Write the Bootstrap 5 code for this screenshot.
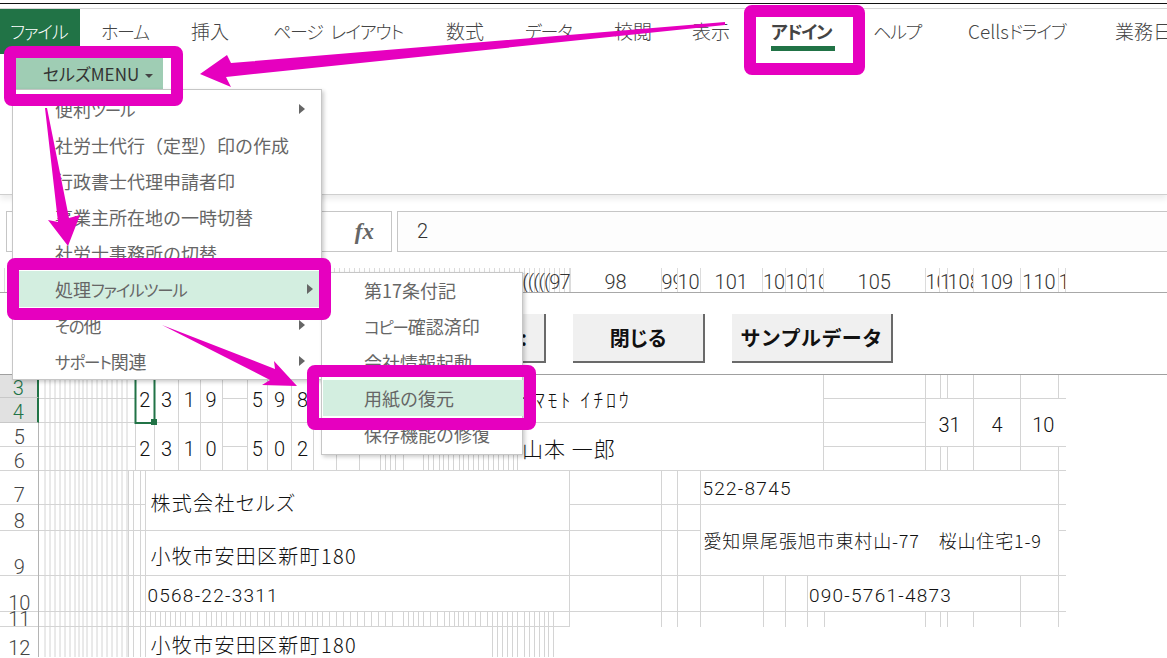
<!DOCTYPE html>
<html lang="ja">
<head>
<meta charset="utf-8">
<title>セルズMENU</title>
<link rel="stylesheet" href="https://cdn.jsdelivr.net/npm/bootstrap@5.3.0/dist/css/bootstrap.min.css">
<style>
:root{--mag:#e600bf;--xl:#217346;--cell:#d4d4d4}
html,body{margin:0;background:#fff}
body{width:1167px;height:658px;overflow:hidden;position:relative;font-family:"Noto Sans CJK JP","Liberation Sans",sans-serif;color:#444}
.rule-a{height:4px;border-bottom:1px solid #111}
.rule-b{height:5px;border-bottom:1px solid #d8d8d8}
.ribbon{height:186px;border-bottom:1px solid #cfcfcf;box-shadow:0 4px 6px rgba(0,0,0,.08);background:#fff}
.tabs{height:45px;font-size:19px;font-weight:300;color:#444}
.tab-item{line-height:44px;white-space:nowrap;flex:none}
.tk{font-size:18px;letter-spacing:-1.2px;word-spacing:5px;font-feature-settings:"palt"}
.tab-file{width:80px;padding-left:10px;background:var(--xl);color:#fff;margin-right:21px}
.t1{width:90px}.t2{width:82px}.t3{width:173px}.t4{width:79px}.t5{width:89px}.t6{width:78px}.t7{width:79px}.t9{width:95px}.t10{width:147px}
.tab-on{font-weight:700;position:relative;width:64px;margin-right:38px;color:#444}
.tab-on::after{content:"";position:absolute;left:0;right:0;top:37px;height:5px;background:var(--xl)}
.cells-btn-wrap{margin:4px 0 0 16px;width:155px;height:36px}
.cells-btn{width:147px;height:31px;background:#9fcdb4;border:0;border-radius:0;font-size:17px;line-height:31px;padding:0 0 0 27px;color:#333;text-align:left;font-weight:400;font-feature-settings:"palt"}
.caret-mini{display:inline-block;border:4px solid transparent;border-top-color:#444;border-bottom:0;margin:0 0 3px 6px}
.fbar{margin-top:16px;height:41px;padding-left:6px;gap:5px}
.fbox{width:386px;border:1px solid #c6c6c6;background:#fff;position:relative}
.fxmark{font-family:"Liberation Serif",serif;font-style:italic;font-weight:700;font-size:23px;color:#666;padding-right:17px;line-height:39px}
.finput{flex:1;border:1px solid #c6c6c6;border-right:0;background:#fdfdfd;padding-left:19px;font-size:20px;line-height:39px;font-weight:300;font-family:Roboto,sans-serif;color:#333}
.colhead{margin-top:16px;height:25px;border-bottom:1px solid #a8a8a8;display:grid;grid-template-columns:570.5px 91px 16px 23px 62.5px 22.5px 21.5px 17px 101.5px 14.5px 7.5px 26px 47px 38px 7.5px;font-family:Roboto,sans-serif;font-weight:300;font-size:20px;line-height:29px;color:#333}
.colhead>div{border-right:1px solid #dcdcdc;overflow:hidden;white-space:nowrap;text-align:center}
.colhead .lead-col{text-align:right;padding-right:0;background:repeating-linear-gradient(90deg,transparent 0 4px,#dcdcdc 4px 5px);letter-spacing:-1px}
.btnrow{height:82px;padding-top:21px;padding-left:405px;gap:27px;border-bottom:1px solid #a0a0a0}
.sheet-btn{height:49px;background:#f0f0f0;border:0;border-right:2px solid #6a6a6a;border-bottom:2px solid #6a6a6a;border-radius:0;font-weight:700;font-size:20px;color:#111;padding:0;line-height:46px}
.sheet-btn:hover{background:#f0f0f0;color:#111}
.b1{width:141px;text-align:right;padding-right:17px;font-feature-settings:"palt"}.b2{width:132px;font-feature-settings:"palt"}.b3{width:161px;letter-spacing:.4px}
.sheet{position:relative;height:282px;display:grid;grid-template-columns:38.5px 96.5px 10.5px 9px 24px 21.5px 22px 25px 20.5px 24px 22.2px 205.3px 50.5px 131px 106.5px 118.5px 48px 47px 45.5px 101px;grid-template-rows:23px 25px 23px 24px 34px 26px 46px 36px 15px 30px;font-family:Roboto,sans-serif;font-weight:300;font-size:20px;color:#111;line-height:1}
.sheet-lines{position:absolute;left:0;top:0}
.sheet>span,.sheet>div{position:relative;white-space:nowrap;align-self:center}
.rn{grid-column:1;text-align:center;color:#444;align-self:end!important;margin-bottom:-1px}
.rn.r11a{margin-bottom:-2px}
.rn-on{background:#e1e1e1;color:var(--xl);border-right:2px solid var(--xl);align-self:stretch!important;display:flex;align-items:center;justify-content:center;padding-top:3px;margin-bottom:0;border-bottom:1px solid #c8c8c8}
.num{text-align:center}
.jp{font-family:"Noto Sans CJK JP",sans-serif;font-weight:300;color:#111}
.jp-a{font-size:20px;letter-spacing:1.3px;padding-left:5px;font-feature-settings:"palt";margin-top:5px}
.r3a{grid-row:1}.r4a{grid-row:2}.r5a{grid-row:3}.r6a{grid-row:4}.r7a{grid-row:5}.r8a{grid-row:6}.r9a{grid-row:7}.r10a{grid-row:8}.r11a{grid-row:9}.r12a{grid-row:10}
.top-d{grid-row:1/3;margin-top:2px}.low-d{grid-row:3/5;margin-top:4px}.mid{grid-row:2/4;margin-top:5px}.co{grid-row:5/7}.zip-r{grid-row:5;margin-top:5px}.addr{grid-row:6/8;font-size:18px;padding-left:3px;letter-spacing:.85px;font-feature-settings:"palt"}
.c1{grid-column:3/5}.c2{grid-column:5}.c3{grid-column:6}.c4{grid-column:7}.c5{grid-column:9}.c6{grid-column:10}.c7{grid-column:11}
.c-name{grid-column:13/17}.c-co{grid-column:4/14}.c-r{grid-column:15/20}.c-m{grid-column:16/19}.c31{grid-column:17}.c4d{grid-column:18}.c10{grid-column:19}
.kana{font-size:20px;letter-spacing:2.8px;padding-left:3px;font-weight:300}
.yamamoto{font-size:21px;padding-left:3px;letter-spacing:1px;font-feature-settings:"palt"}
.tel{padding-left:2px;letter-spacing:1.25px;font-size:19px;margin-top:3px}
.xl-menu.dropdown-menu{position:absolute;display:block;margin:0;padding:1px 0 0;border:1px solid #c6c6c6;border-radius:0;box-shadow:2px 2px 4px rgba(0,0,0,.2);z-index:5;min-width:0}
.m1{left:12px;top:89px;width:310px;height:291px}
.m2{left:321px;top:272px;width:202px;height:183px;z-index:6!important;padding-top:0!important}
.xl-menu .dropdown-item{height:36px;line-height:36px;padding:0 16px 0 42px;font-size:18px;color:#666;background:transparent;display:flex;justify-content:space-between;align-items:center;white-space:nowrap}
.m2 .dropdown-item:first-child{margin-top:-1px}
.xl-menu .dropdown-item.hl{background:#d3eee0;color:#666}
.m1 .hl-1{margin:0 2px 0 6px;padding-left:36px;padding-right:14px}
.m2 .hl-2{margin:0 1px;padding-left:41px}
.kn{font-size:16.5px;letter-spacing:-1.2px;font-feature-settings:"palt"}
.tri{display:inline-block;border:5px solid transparent;border-left:6px solid #666;border-right:0}
.frame-box{position:absolute;border:12px solid var(--mag);border-radius:8px;z-index:8;pointer-events:none}
.f1{left:4px;top:46px;width:179px;height:60px}
.f2{left:744px;top:5px;width:121px;height:70px}
.f3{left:7px;top:258px;width:324px;height:62px}
.f4{left:307px;top:365px;width:229px;height:65px}
.arrows{position:absolute;left:0;top:0;z-index:9;pointer-events:none}
</style>
</head>
<body>
<div class="rule-a"></div>
<div class="rule-b"></div>
<div class="ribbon">
  <div class="tabs d-flex">
    <div class="tab-item tab-file"><span class="tk">ファイル</span></div>
    <div class="tab-item t1"><span class="tk">ホーム</span></div>
    <div class="tab-item t2">挿入</div>
    <div class="tab-item t3"><span class="tk">ページ レイアウト</span></div>
    <div class="tab-item t4">数式</div>
    <div class="tab-item t5"><span class="tk">データ</span></div>
    <div class="tab-item t6">校閲</div>
    <div class="tab-item t7">表示</div>
    <div class="tab-item tab-on"><span class="tk">アドイン</span></div>
    <div class="tab-item t9"><span class="tk">ヘルプ</span></div>
    <div class="tab-item t10">Cells<span class="tk">ドライブ</span></div>
    <div class="tab-item">業務日</div>
  </div>
  <div class="cells-btn-wrap"><button class="btn cells-btn" type="button">セルズMENU<span class="caret-mini"></span></button></div>
</div>
<div class="fbar d-flex">
  <div class="fbox d-flex justify-content-end"><span class="fxmark">fx</span></div>
  <div class="finput">2</div>
</div>
<div class="colhead">
  <div class="lead-col">((((((((((97</div><div>98</div><div>99</div><div>100</div><div>101</div><div>102</div><div>103</div><div>104</div><div>105</div><div>106</div><div>107</div><div>108</div><div>109</div><div>110</div><div>111</div>
</div>
<div class="btnrow d-flex">
  <button class="btn sheet-btn b1" type="button">印刷実行:</button>
  <button class="btn sheet-btn b2" type="button">閉じる</button>
  <button class="btn sheet-btn b3" type="button">サンプルデータ</button>
</div>
<div class="sheet">
  <svg class="sheet-lines" width="1167" height="282" viewBox="0 376 1167 282" fill="none">
    <path stroke="#d4d4d4" d="M45 376V658M50 376V658M55 376V658M60 376V658M65 376V658M70 376V658M75 376V658M79 376V658M83 376V658M87 376V658M92 376V658M97 376V658M102 376V658M107 376V658M112 376V658M117 376V658M122 376V658M127 376V658M135.500 376V471M133.500 471V658M128.500 471V658M140.500 471V658M145.500 471V658
    M154.500 376V471M178.500 376V471M200.500 376V471M222.500 376V471M247.500 376V471M267.500 376V471M291.500 376V471M313.500 376V471M336.500 376V471M359.500 376V471M380.500 376V471M385.500 376V471M390.500 376V471M395.500 376V471M403.500 376V471M423.500 376V471M428.500 376V471M433.500 376V471M439.500 376V471M443.500 376V471M448.500 376V471M453.500 376V471M459.500 376V471M463.500 376V471M468.500 376V471M473.500 376V471M478.500 376V471M483.500 376V471M488.500 376V471M493.500 376V471M498.500 376V471M503.500 376V471M508.500 376V471M513.500 376V471M517.500 376V471
    M823.500 376V471M925.500 376V471M940.500 376V399M947.500 376V399M973.500 376V471M1020.500 376V471M1058.500 376V399M940.500 447V471M947.500 447V471M1058.500 447V471
    M569.500 471V628M661.500 471V628M677.500 471V628M700.500 471V628M1058.500 471V628M763.500 577V628M785.500 577V628M807.500 577V628M1020.500 577V628M824.500 613V628M925.500 613V628M940.500 613V628M947.500 613V628M973.500 613V628
    M150.500 613V628M155.500 613V628M160.500 613V628M165.500 613V628M170.500 613V628M175.500 613V628M180.500 613V628M185.500 613V628M192.500 613V628M199.500 613V628M206.500 613V628M211.500 613V628M216.500 613V628M221.500 613V628M226.500 613V628M233.500 613V628M240.500 613V628M245.500 613V628M250.500 613V628M257.500 613V628M264.500 613V628M269.500 613V628M274.500 613V628M281.500 613V628M288.500 613V628M293.500 613V628M298.500 613V628M305.500 613V628M312.500 613V628M317.500 613V628M322.500 613V628M329.500 613V628M336.500 613V628M343.500 613V628M350.500 613V628M357.500 613V628M364.500 613V628M371.500 613V628M378.500 613V628M385.500 613V628M392.500 613V628M403.500 613V628M408.500 613V628M413.500 613V628M418.500 613V628M423.500 613V628M430.500 613V628M437.500 613V628M444.500 613V628M449.500 613V628M454.500 613V628M458.500 613V628M463.500 613V628M468.500 613V628M475.500 613V628M480.500 613V628M487.500 613V628
    M492.500 613V658M497.500 613V658M502.500 613V658M507.500 613V658M512.500 613V658M517.500 613V658M524.500 613V658M529.500 613V658M534.500 613V658M539.500 613V658M544.500 613V658M548.500 613V658M553.500 613V658
    M0 399.500H135M222 399.500H247M824 399.500H1066M0 423.500H925M0 447.500H135M222 447.500H247M824 447.500H1066M0 471.500H1066M0 505.500H145M570 505.500H1066M0 531.500H700M1058 531.500H1066M0 576.500H1066M0 612.500H1066M0 627.500H569"/>
    <path stroke="#b4b4b4" d="M38.500 424V658"/>
    <path stroke="#217346" stroke-width="2" d="M135.500 380V424H154.500V380"/>
    <path fill="#217346" d="M151 420h6v6h-6z"/>
    <path stroke="#111" d="M322 455.500h4M345 455.500h4M366 455.500h4M410 455.500h4"/>
  </svg>
  <div class="rn rn-on r3a">3</div><div class="rn rn-on r4a">4</div>
  <div class="rn r5a">5</div><div class="rn r6a">6</div><div class="rn r7a">7</div><div class="rn r8a">8</div><div class="rn r9a">9</div><div class="rn r10a">10</div><div class="rn r11a">11</div><div class="rn r12a">12</div>

  <span class="num top-d c1">2</span><span class="num top-d c2">3</span><span class="num top-d c3">1</span><span class="num top-d c4">9</span><span class="num top-d c5">5</span><span class="num top-d c6">9</span><span class="num top-d c7">8</span>
  <span class="num low-d c1">2</span><span class="num low-d c2">3</span><span class="num low-d c3">1</span><span class="num low-d c4">0</span><span class="num low-d c5">5</span><span class="num low-d c6">0</span><span class="num low-d c7">2</span>

  <span class="jp kana top-d c-name">ﾔﾏﾓﾄ ｲﾁﾛｳ</span>
  <span class="jp yamamoto low-d c-name">山本 一郎</span>
  <span class="num mid c31">31</span><span class="num mid c4d">4</span><span class="num mid c10">10</span>

  <span class="jp jp-a co c-co">株式会社セルズ</span>
  <span class="jp jp-a r9a c-co">小牧市安田区新町180</span>
  <span class="tel r10a c-co">0568-22-3311</span>
  <span class="jp jp-a r12a c-co">小牧市安田区新町180</span>
  <span class="tel zip-r c-r">522-8745</span>
  <span class="jp addr c-r">愛知県尾張旭市東村山-77　桜山住宅1-9</span>
  <span class="tel r10a c-m">090-5761-4873</span>
</div>

<div class="dropdown-menu xl-menu m1">
  <a class="dropdown-item" href="#"><span>便利<span class="kn">ツール</span></span><span class="tri"></span></a>
  <a class="dropdown-item" href="#">社労士代行（定型）印の作成</a>
  <a class="dropdown-item" href="#">行政書士代理申請者印</a>
  <a class="dropdown-item" href="#">事業主所在地の一時切替</a>
  <a class="dropdown-item" href="#">社労士事務所の切替</a>
  <a class="dropdown-item hl hl-1" href="#"><span>処理<span class="kn">ファイルツール</span></span><span class="tri"></span></a>
  <a class="dropdown-item" href="#"><span><span class="kn">その</span>他</span><span class="tri"></span></a>
  <a class="dropdown-item" href="#"><span><span class="kn">サポート</span>関連</span><span class="tri"></span></a>
</div>
<div class="dropdown-menu xl-menu m2">
  <a class="dropdown-item" href="#">第17条付記</a>
  <a class="dropdown-item" href="#"><span><span class="kn">コピー</span>確認済印</span></a>
  <a class="dropdown-item" href="#">会社情報起動</a>
  <a class="dropdown-item hl hl-2" href="#">用紙の復元</a>
  <a class="dropdown-item" href="#">保存機能の修復</a>
</div>

<div class="frame-box f1"></div>
<div class="frame-box f2"></div>
<div class="frame-box f3"></div>
<div class="frame-box f4"></div>
<svg class="arrows" width="1167" height="658" viewBox="0 0 1167 658">
  <g fill="#e600bf">
    <polygon points="725,22 231,63 227,55 200,74 231,87 226,77 725,25"/>
    <polygon points="45,108 47,108 69,218 80,215 68,246 48,220 58,222"/>
    <polygon points="162,325 275,369 274,361 297,386 262,385 270,380"/>
  </g>
</svg>
<script src="https://cdn.jsdelivr.net/npm/bootstrap@5.3.0/dist/js/bootstrap.bundle.min.js"></script>
</body>
</html>
